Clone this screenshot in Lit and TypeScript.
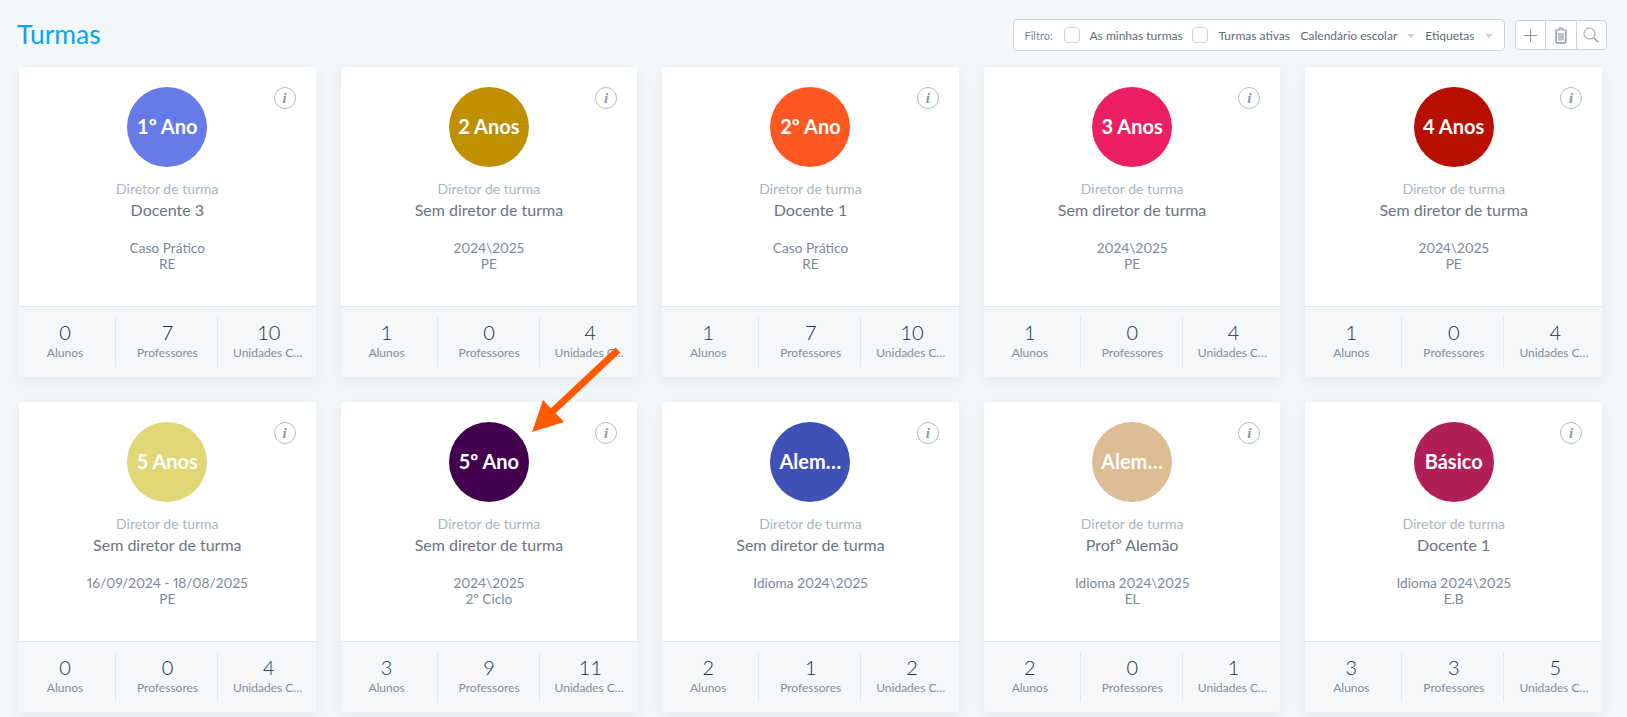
import { css, html, LitElement } from "lit";
import { customElement } from "lit/decorators.js";

interface Turma {
  name: string;
  color: string;
  director: string;
  lines: string[];
  alunos: number;
  professores: number;
  unidades: number;
}

const TURMAS: Turma[] = [
  { name: "1º Ano", color: "#667ae8", director: "Docente 3", lines: ["Caso Prático", "RE"], alunos: 0, professores: 7, unidades: 10 },
  { name: "2 Anos", color: "#bf8f00", director: "Sem diretor de turma", lines: ["2024\\2025", "PE"], alunos: 1, professores: 0, unidades: 4 },
  { name: "2º Ano", color: "#ff5722", director: "Docente 1", lines: ["Caso Prático", "RE"], alunos: 1, professores: 7, unidades: 10 },
  { name: "3 Anos", color: "#ec1f63", director: "Sem diretor de turma", lines: ["2024\\2025", "PE"], alunos: 1, professores: 0, unidades: 4 },
  { name: "4 Anos", color: "#b70f00", director: "Sem diretor de turma", lines: ["2024\\2025", "PE"], alunos: 1, professores: 0, unidades: 4 },
  { name: "5 Anos", color: "#e0d777", director: "Sem diretor de turma", lines: ["16/09/2024 - 18/08/2025", "PE"], alunos: 0, professores: 0, unidades: 4 },
  { name: "5º Ano", color: "#42004f", director: "Sem diretor de turma", lines: ["2024\\2025", "2º Ciclo"], alunos: 3, professores: 9, unidades: 11 },
  { name: "Alemão", color: "#3f51b5", director: "Sem diretor de turma", lines: ["Idioma 2024\\2025"], alunos: 2, professores: 1, unidades: 2 },
  { name: "Alemão", color: "#dcbd94", director: "Profº Alemão", lines: ["Idioma 2024\\2025", "EL"], alunos: 2, professores: 0, unidades: 1 },
  { name: "Básico", color: "#b02056", director: "Docente 1", lines: ["Idioma 2024\\2025", "E.B"], alunos: 3, professores: 3, unidades: 5 },
];

@customElement("app-root")
export class AppRoot extends LitElement {
  static styles = css`
    :host {
      display: block;
      position: relative;
      height: 717px;
      overflow: hidden;
      background: #f3f7f9;
      font-family: Lato, "Liberation Sans", sans-serif;
      color: #6b7480;
    }

    .header {
      display: flex;
      align-items: center;
      justify-content: space-between;
      height: 67px;
      padding: 0 20px 0 17px;
      box-sizing: border-box;
    }

    h1 {
      margin: 1px 0 0;
      font-size: 26.5px;
      font-weight: 400;
      line-height: 32px;
      color: #03a9f4;
    }

    .tools {
      display: flex;
      align-items: center;
      gap: 10px;
      margin-top: 3px;
    }

    .filter {
      display: flex;
      align-items: center;
      width: 492px;
      height: 32px;
      box-sizing: border-box;
      padding: 0 0 0 11px;
      background: #fff;
      border: 1px solid #cdd3db;
      border-radius: 4px;
      font-size: 12px;
      color: #5d6a79;
      white-space: nowrap;
    }

    .filter-label {
      width: 28px;
      margin-right: 11px;
      font-size: 11px;
      color: #7c8794;
    }

    .check {
      flex: none;
      box-sizing: border-box;
      width: 16px;
      height: 16px;
      margin-right: 10px;
      border: 1px solid #cdd3db;
      border-radius: 4px;
    }

    .check-label {
      width: 92px;
      margin-right: 10px;
    }

    .check-label.second {
      width: 71px;
      margin-left: 1px;
      margin-right: 11px;
    }

    .select {
      display: flex;
      align-items: center;
    }

    .select.first {
      margin-right: 10px;
    }

    .caret {
      width: 0;
      height: 0;
      margin: 2px 0 0 10px;
      border: 4px solid transparent;
      border-top: 4px solid #cdd3da;
      border-bottom: 0;
    }

    .buttons {
      display: flex;
      height: 30px;
      box-sizing: border-box;
      background: #fff;
      border: 1px solid #cdd3db;
      border-radius: 4px;
    }

    .btn {
      display: flex;
      align-items: center;
      justify-content: center;
      width: 29.5px;
      color: #8d97a3;
    }

    .btn + .btn {
      border-left: 1px solid #cdd3db;
    }

    .grid {
      display: grid;
      grid-template-columns: repeat(5, 1fr);
      column-gap: 25px;
      row-gap: 25px;
      padding: 0 25px 0 19px;
    }

    .card {
      position: relative;
      display: flex;
      flex-direction: column;
      height: 310px;
      min-width: 0;
      background: #fff;
      border-radius: 3px;
      box-shadow: 0 4px 14px rgba(90, 110, 130, 0.1);
      overflow: hidden;
    }

    .info {
      position: absolute;
      top: 20px;
      right: 20px;
      display: flex;
      align-items: center;
      justify-content: center;
      box-sizing: border-box;
      width: 22px;
      height: 22px;
      border: 1px solid #b3bccb;
      border-radius: 50%;
      font-family: "Liberation Serif", serif;
      font-size: 15px;
      font-style: italic;
      font-weight: 700;
      color: #8d97a8;
    }

    .body {
      flex: 1;
      display: flex;
      flex-direction: column;
      align-items: center;
      padding-top: 20px;
      text-align: center;
    }

    .circle {
      box-sizing: border-box;
      width: 80px;
      height: 80px;
      padding: 0 9px;
      border-radius: 50%;
      overflow: hidden;
      color: #fff;
      font-size: 20px;
      font-weight: 700;
      line-height: 78px;
      white-space: nowrap;
      text-overflow: ellipsis;
    }

    .dir-label {
      margin-top: 14px;
      font-size: 14px;
      line-height: 16px;
      color: #a9b4c4;
    }

    .dir {
      margin-top: 3px;
      font-size: 16px;
      line-height: 20px;
      color: #6b7480;
    }

    .meta {
      margin-top: 20px;
      font-size: 13.7px;
      font-variant-numeric: proportional-nums;
      line-height: 16px;
      color: #7d8896;
    }

    .stats {
      display: grid;
      grid-template-columns: 96px 102px 1fr;
      height: 71px;
      box-sizing: border-box;
      padding: 10px 0;
      background: #f5f7f9;
      border-top: 1px solid #e0e6ee;
    }

    .stat {
      min-width: 0;
      padding: 0 8px 0 10px;
      text-align: center;
    }

    .stat:first-child {
      padding: 0 13px 0 9px;
    }

    .stat:last-child {
      padding: 0 11px 0 15px;
    }

    .stat + .stat {
      border-left: 1px solid #dfe6ee;
    }

    .num {
      margin: 1px 0 -2px;
      font-size: 20px;
      font-weight: 300;
      line-height: 29px;
      color: #1c2f45;
    }

    .cap {
      overflow: hidden;
      font-size: 12px;
      line-height: 15px;
      color: #828d9b;
      white-space: nowrap;
      text-overflow: ellipsis;
    }

    .arrow {
      position: absolute;
      left: 520px;
      top: 340px;
      width: 110px;
      height: 105px;
    }
  `;

  private card(t: Turma) {
    return html`
      <div class="card">
        <span class="info">i</span>
        <div class="body">
          <div class="circle" style="background:${t.color}">${t.name}</div>
          <div class="dir-label">Diretor de turma</div>
          <div class="dir">${t.director}</div>
          <div class="meta">${t.lines.map((l) => html`<div>${l}</div>`)}</div>
        </div>
        <div class="stats">
          <div class="stat"><div class="num">${t.alunos}</div><div class="cap">Alunos</div></div>
          <div class="stat"><div class="num">${t.professores}</div><div class="cap">Professores</div></div>
          <div class="stat"><div class="num">${t.unidades}</div><div class="cap">Unidades Curriculares</div></div>
        </div>
      </div>
    `;
  }

  protected override render() {
    return html`
      <div class="header">
        <h1>Turmas</h1>
        <div class="tools">
          <div class="filter">
            <span class="filter-label">Filtro:</span>
            <span class="check"></span>
            <span class="check-label">As minhas turmas</span>
            <span class="check"></span>
            <span class="check-label second">Turmas ativas</span>
            <span class="select first">Calendário escolar<i class="caret"></i></span>
            <span class="select">Etiquetas<i class="caret"></i></span>
          </div>
          <div class="buttons">
            <div class="btn">
              <svg width="13" height="13" viewBox="0 0 13 13" fill="none" stroke="currentColor">
                <path d="M6.5 0v13M0 6.5h13" />
              </svg>
            </div>
            <div class="btn">
              <svg width="14" height="17" viewBox="0 0 14 17" fill="none" stroke="currentColor">
                <path d="M1 3h12M5 3V1h4v2" />
                <path d="M2.2 3.5v11.2c0 .9.5 1.3 1.3 1.3h7c.8 0 1.3-.4 1.3-1.3V3.5" stroke-width="1.5" />
                <path d="M5 6v7.5M7 6v7.5M9 6v7.5" stroke-width="1.2" />
              </svg>
            </div>
            <div class="btn">
              <svg width="16" height="16" viewBox="0 0 16 16" fill="none" stroke="currentColor">
                <circle cx="6.5" cy="6.5" r="5.5" />
                <path d="M10.5 10.5l4.8 4.8" stroke-width="1.3" />
              </svg>
            </div>
          </div>
        </div>
      </div>
      <div class="grid">${TURMAS.map((t) => this.card(t))}</div>
      <svg class="arrow" viewBox="0 0 110 105">
        <path d="M98 10 L33 71" stroke="#ff5a00" stroke-width="7" />
        <path d="M12 92 L23 60 L44 82 Z" fill="#ff5a00" />
      </svg>
    `;
  }
}
